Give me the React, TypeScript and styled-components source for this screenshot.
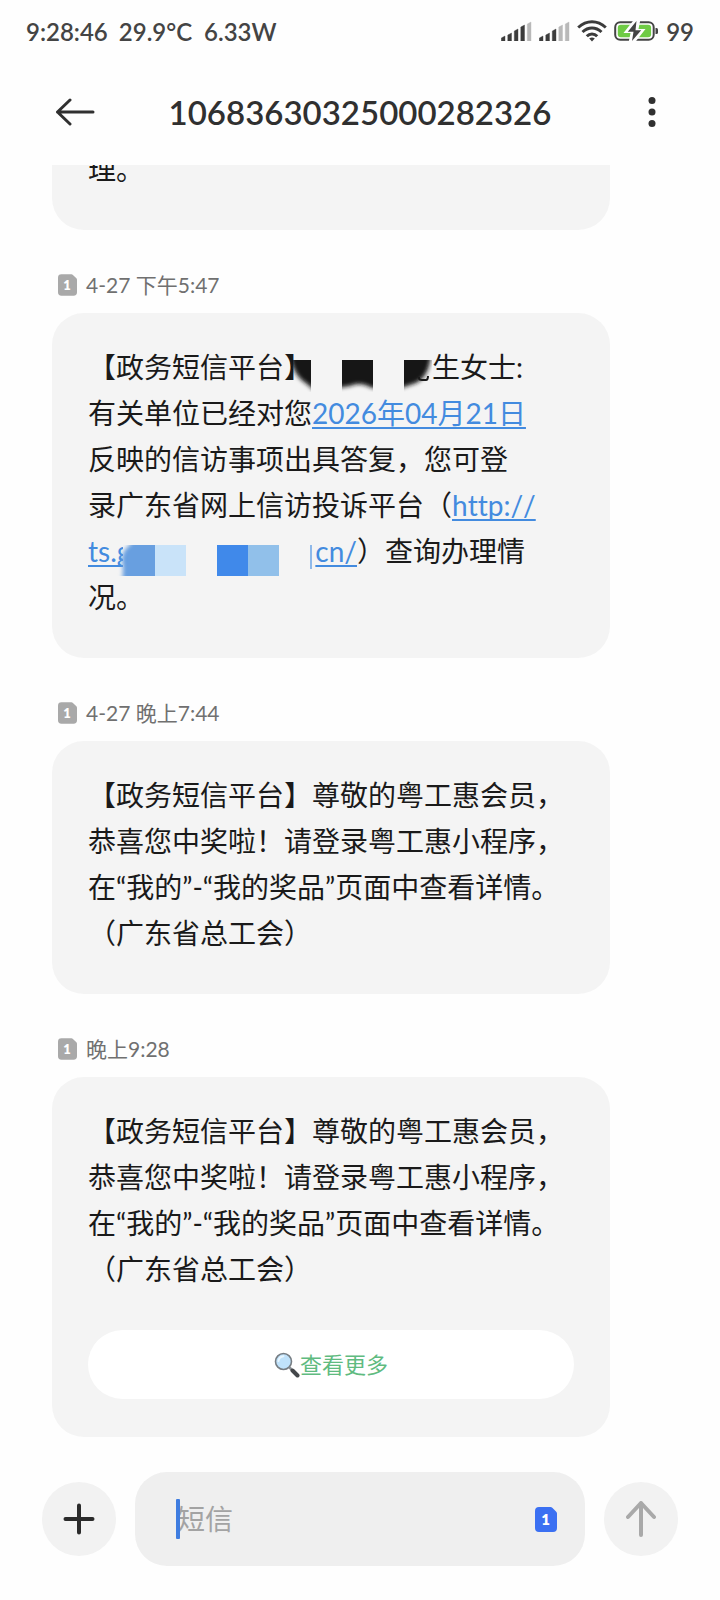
import React from "react";
import styled, { createGlobalStyle } from "styled-components";

const GlobalStyle = createGlobalStyle`
  *, *::before, *::after { box-sizing: border-box; }
  body {
    margin: 0;
    background: #fefefe;
    color: #1a1a1a;
    font-family: Lato, "Noto Sans CJK SC", sans-serif;
    font-variant-ligatures: none;
    font-kerning: none;
  }
  button { border: 0; padding: 0; font: inherit; cursor: pointer; }
`;

const Screen = styled.div`
  display: flex;
  flex-direction: column;
  height: 100vh;
`;

const StatusBar = styled.div`
  display: flex;
  align-items: center;
  justify-content: space-between;
  height: 62px;
  padding: 0 26px;
  font-size: 24px;
  font-weight: 600;
  color: #444444;
`;

const StatusGroup = styled.div<{ $gap: number }>`
  display: flex;
  align-items: center;
  gap: ${(p) => p.$gap}px;
  white-space: pre;
`;

const Header = styled.header`
  display: flex;
  align-items: center;
  justify-content: space-between;
  height: 103px;
  padding: 0 40px 4px;
`;

const IconButton = styled.button<{ $inset?: number }>`
  display: flex;
  align-items: center;
  justify-content: center;
  width: 56px;
  height: 48px;
  padding-left: ${(p) => p.$inset ?? 0}px;
  background: none;
  color: #303030;
`;

const Title = styled.h1`
  margin: 0;
  font-size: 33px;
  line-height: 40px;
  font-weight: 600;
  color: #303030;
`;

const MessageList = styled.main`
  flex: 1;
  min-height: 0;
  display: flex;
  flex-direction: column;
  justify-content: flex-end;
  overflow: hidden;
  padding: 0 110px 0 52px;
`;

const Meta = styled.div`
  display: flex;
  flex: none;
  align-items: center;
  gap: 9px;
  height: 83px;
  padding: 26px 0 0 6px;
  font-size: 21px;
  line-height: 22px;
  color: #707070;
`;

const Bubble = styled.article`
  flex: none;
  padding: 31px 36px 38px;
  border-radius: 32px;
  background: #f4f4f4;
`;

const Body = styled.p`
  margin: 0;
  font-size: 28px;
  line-height: 46px;
  white-space: nowrap;
`;

const Link = styled.a`
  color: #438bdf;
  text-decoration: underline;
  text-decoration-thickness: 2px;
  text-decoration-skip-ink: none;
  text-underline-offset: 3px;
`;

const Mask = styled.svg<{ $pull: number }>`
  margin: -10px 0 -10px -${(p) => p.$pull}px;
  vertical-align: -4px;
`;

const MoreButton = styled.button`
  display: flex;
  align-items: center;
  justify-content: center;
  width: 100%;
  height: 69px;
  margin-top: 38px;
  border-radius: 35px;
  background: #ffffff;
  && {
    font-size: 22px;
    line-height: 22px;
  }
  color: #5fbb80;
`;

const Composer = styled.form`
  display: flex;
  align-items: center;
  gap: 19px;
  padding: 35px 42px 34px;
`;

const RoundButton = styled.button<{ $color: string }>`
  display: flex;
  flex: none;
  align-items: center;
  justify-content: center;
  width: 74px;
  height: 74px;
  border-radius: 50%;
  background: #f2f2f2;
  color: ${(p) => p.$color};
`;

const Field = styled.label`
  position: relative;
  display: flex;
  flex: 1;
  align-items: center;
  min-width: 0;
  height: 94px;
  padding: 0 28px 0 42px;
  border-radius: 32px;
  background: #efefef;
`;

const Input = styled.input`
  flex: 1;
  min-width: 0;
  height: 46px;
  padding: 0;
  border: 0;
  outline: 0;
  background: none;
  font: inherit;
  font-size: 28px;
  color: #1a1a1a;
  &::placeholder { color: #a3a3a3; opacity: 1; }
`;

const Caret = styled.span`
  position: absolute;
  left: 41px;
  top: 27px;
  width: 4px;
  height: 40px;
  border-radius: 1px;
  background: #3f7de0;
`;

function SimIcon({ color, width, height }: { color: string; width: number; height: number }) {
  return (
    <svg width={width} height={height} viewBox="0 0 22 25" aria-label="SIM 1">
      <path d="M4 0H15.500Q16.500 0 17.300 .8L21 4.500Q22 5.500 22 6.500V21Q22 25 18 25H4Q0 25 0 21V4Q0 0 4 0Z" fill={color} />
      <text x="10.500" y="18" textAnchor="middle" fontFamily="Lato, sans-serif" fontSize="15" fontWeight="800" fill="#fff">1</text>
    </svg>
  );
}

function Signal({ level }: { level: number }) {
  const heights = [5, 8, 12, 16, 19];
  return (
    <svg width="31" height="20" viewBox="0 0 31 20" aria-hidden="true">
      {heights.map((h, i) => (
        <path
          key={h}
          d={`M${i * 6.5 + 0.3} ${20}V${20 - h + 2}L${i * 6.5 + 4} ${20 - h}V20Z`}
          fill={i < level ? "#3c3c3c" : "#b9b9b9"}
          stroke={i < level ? "#3c3c3c" : "#b9b9b9"}
          strokeWidth=".4"
          strokeLinejoin="round"
        />
      ))}
    </svg>
  );
}

function Wifi() {
  return (
    <svg width="30" height="22" viewBox="0 0 30 22" fill="none" stroke="#3c3c3c" strokeWidth="3" aria-hidden="true">
      <path d="M1.200 7.500Q7.500 1.800 15 1.800T28.800 7.500" />
      <path d="M5.500 12Q9.800 8 15 8T24.500 12" />
      <path d="M9.800 16.300Q12 14 15 14T20.200 16.300" />
      <path d="M12.200 18.500Q15 16.300 17.800 18.500L15 21.600Z" fill="#3c3c3c" stroke="none" />
    </svg>
  );
}

function Battery() {
  return (
    <svg width="45" height="22" viewBox="0 0 45 22" aria-hidden="true">
      <rect x="1.200" y="2.200" width="38.500" height="17.600" rx="5" fill="#fff" stroke="#444" strokeWidth="2" />
      <rect x="3.800" y="4.800" width="33.300" height="12.400" rx="3" fill="#6fcb45" />
      <path d="M20.500 -1L9.500 13H16.500L14.500 23H20.500L31.500 9H24.500L26.500 -1Z" fill="#fefefe" />
      <path d="M22.500 1L13.800 11.800H19.500L18 21L27.200 10.200H21.500Z" fill="#444" />
      <path d="M41.500 8H42.500Q44 8 44 9.500V12.500Q44 14 42.500 14H41.500Z" fill="#444" />
    </svg>
  );
}

function NameMask() {
  return (
    <Mask $pull={22} width="142" height="40" viewBox="0 0 142 40" aria-hidden="true">
      <defs>
        <filter id="soft" x="-30%" y="-30%" width="160%" height="160%">
          <feGaussianBlur stdDeviation="2" />
        </filter>
        <clipPath id="nameArea"><path d="M0 8H21V40H0ZM52 8H83V40H52ZM114 8H142V40H114Z" /></clipPath>
      </defs>
      <path d="M8 0H115V8H137V36H22L6 16Z" fill="#f4f4f4" />
      <g clipPath="url(#nameArea)">
        <path d="M1 0H25V39L17 32Q5 25 1 9Z" fill="#171717" filter="url(#soft)" />
        <path d="M47 0H88V36H82Q70 29 60 34L47 36Z" fill="#171717" filter="url(#soft)" />
        <path d="M108 0H141Q140 24 126 31L108 37Z" fill="#171717" filter="url(#soft)" />
      </g>
      <path d="M129 25V26Q129 28 132 28H136Q138 28 138 24" fill="none" stroke="#1a1a1a" strokeWidth="2" />
    </Mask>
  );
}

function UrlMask() {
  return (
    <Mask $pull={14} width="198" height="40" viewBox="0 0 198 40" aria-hidden="true">
      <defs>
        <clipPath id="urlArea"><rect y="9" width="38" height="31" /></clipPath>
      </defs>
      <path d="M6 0H194V40H6Z" fill="#f4f4f4" />
      <g clipPath="url(#urlArea)">
        <path d="M14 4H46V46H5Q7 32 5 24Q5 14 14 8Z" fill="#679fe0" filter="url(#soft)" />
      </g>
      <rect x="38" y="9" width="31" height="31" fill="#c9e3f9" />
      <rect x="100" y="9" width="31" height="31" fill="#4089ea" />
      <rect x="131" y="9" width="31" height="31" fill="#91c0ea" />
      <rect x="193" y="9" width="2" height="24" fill="#8fb9ea" />
    </Mask>
  );
}

function Magnifier() {
  return (
    <svg width="26" height="26" viewBox="0 0 26 26" aria-hidden="true">
      <path d="M15.500 15.500L19 19" stroke="#8b9196" strokeWidth="2.500" />
      <path d="M18.500 18.500L23.500 23.500" stroke="#44474a" strokeWidth="4" strokeLinecap="round" />
      <circle cx="9.500" cy="9.500" r="8" fill="#bfe2fb" stroke="#767d83" strokeWidth="1.600" />
      <path d="M4.500 9Q5 4.700 9.500 4.200" fill="none" stroke="#e8f6ff" strokeWidth="2" strokeLinecap="round" />
    </svg>
  );
}

function Stamp({ children }: { children: React.ReactNode }) {
  return (
    <Meta>
      <SimIcon color="#a9a9a9" width={19} height={22} />
      <time>{children}</time>
    </Meta>
  );
}

function PrizeText() {
  return (
    <Body>
      【政务短信平台】尊敬的粤工惠会员，<br />
      恭喜您中奖啦！请登录粤工惠小程序，<br />
      在“我的”-“我的奖品”页面中查看详情。<br />
      （广东省总工会）
    </Body>
  );
}

export default function App() {
  return (
    <Screen lang="zh-CN">
      <GlobalStyle />
      <StatusBar>
        <StatusGroup $gap={11}>
          <span>9:28:46</span>
          <span>29.9°C  6.33W</span>
        </StatusGroup>
        <StatusGroup $gap={7}>
          <Signal level={4} />
          <Signal level={3} />
          <Wifi />
          <Battery />
          <span>99</span>
        </StatusGroup>
      </StatusBar>
      <Header>
        <IconButton type="button" aria-label="返回" $inset={14}>
          <svg width="40" height="28" viewBox="0 0 40 28" fill="none" stroke="currentColor" strokeWidth="3" strokeLinecap="round" strokeLinejoin="round">
            <path d="M38 14H2.500M15 2L2.500 14L15 26" />
          </svg>
        </IconButton>
        <Title>10683630325000282326</Title>
        <IconButton type="button" aria-label="更多">
          <svg width="8" height="32" viewBox="0 0 8 32" fill="currentColor">
            <circle cx="4" cy="4.500" r="3.500" />
            <circle cx="4" cy="16" r="3.500" />
            <circle cx="4" cy="27.500" r="3.500" />
          </svg>
        </IconButton>
      </Header>
      <MessageList>
        <Bubble><Body>理。</Body></Bubble>
        <Stamp>4-27 下午5:47</Stamp>
        <Bubble>
          <Body>
            【政务短信平台】<NameMask />生女士:<br />
            有关单位已经对您<Link href="#date">2026年04月21日</Link><br />
            反映的信访事项出具答复，您可登<br />
            录广东省网上信访投诉平台（<Link href="#site">http://<br />ts.g<UrlMask />cn/</Link>）查询办理情<br />
            况。
          </Body>
        </Bubble>
        <Stamp>4-27 晚上7:44</Stamp>
        <Bubble><PrizeText /></Bubble>
        <Stamp>晚上9:28</Stamp>
        <Bubble>
          <PrizeText />
          <MoreButton type="button"><Magnifier />查看更多</MoreButton>
        </Bubble>
      </MessageList>
      <Composer onSubmit={(e) => e.preventDefault()}>
        <RoundButton type="button" $color="#2b2b2b" aria-label="添加">
          <svg width="32" height="32" viewBox="0 0 32 32" stroke="currentColor" strokeWidth="4" strokeLinecap="round">
            <path d="M16 2.500V29.500M2.500 16H29.500" />
          </svg>
        </RoundButton>
        <Field>
          <Input type="text" placeholder="短信" aria-label="短信" />
          <Caret />
          <SimIcon color="#3b70f2" width={22} height={25} />
        </Field>
        <RoundButton type="submit" $color="#a9a9a9" aria-label="发送">
          <svg width="32" height="38" viewBox="0 0 32 38" fill="none" stroke="currentColor" strokeWidth="4" strokeLinecap="round" strokeLinejoin="round">
            <path d="M16 35V3M3 17L16 3L29 17" />
          </svg>
        </RoundButton>
      </Composer>
    </Screen>
  );
}
